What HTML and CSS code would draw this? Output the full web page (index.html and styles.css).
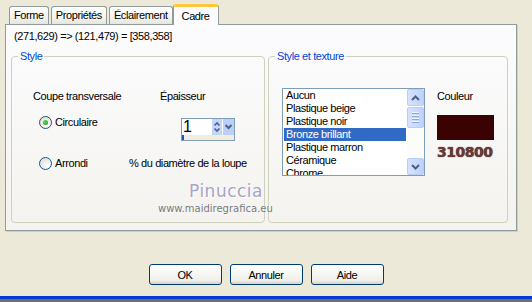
FILE: index.html
```html
<!DOCTYPE html>
<html lang="fr">
<head>
    <meta charset="UTF-8">
    <title>Cadre</title>
    <link rel="stylesheet" href="styles.css">
</head>
<body>
    <div class="tabs">
        <div class="tab">Forme</div>
        <div class="tab">Propriétés</div>
        <div class="tab">Éclairement</div>
        <div class="tab active">Cadre</div>
    </div>

    <div class="panel">
        <div class="coords">(271,629) =&gt; (121,479) = [358,358]</div>

        <div class="groups">
            <!-- Style -->
            <fieldset class="group group-style">
                <legend>Style</legend>
                <div class="row row-head">
                    <span class="col-section">Coupe transversale</span>
                    <span>Épaisseur</span>
                </div>
                <div class="row row-main">
                    <label class="radio radio-wide">
                        <span class="dot checked"></span>Circulaire
                    </label>
                    <div class="spinner">
                        <div class="spinner-top">
                            <span class="spinner-value">1</span>
                            <svg class="spinner-btns" width="22" height="16" viewBox="0 0 22 16">
                                <rect x="0" y="0" width="10" height="16" fill="#c4d5fa"/>
                                <rect x="11" y="0" width="11" height="16" fill="#bccff6"/>
                                <path d="M2.5 6.5 L5 4 L7.5 6.5" fill="none" stroke="#4d6185" stroke-width="1.6"/>
                                <path d="M2.5 9.5 L5 12 L7.5 9.5" fill="none" stroke="#4d6185" stroke-width="1.6"/>
                                <path d="M13.5 6 L16.5 9 L19.5 6" fill="none" stroke="#4d6185" stroke-width="2"/>
                            </svg>
                        </div>
                        <div class="spinner-bottom"></div>
                    </div>
                </div>
                <div class="row row-alt">
                    <label class="radio radio-narrow">
                        <span class="dot"></span>Arrondi
                    </label>
                    <span>% du diamètre de la loupe</span>
                </div>
            </fieldset>

            <!-- Style et texture -->
            <fieldset class="group group-texture">
                <legend>Style et texture</legend>
                <div class="texture-row">
                    <div class="listbox">
                        <ul class="list-items">
                            <li>Aucun</li>
                            <li>Plastique beige</li>
                            <li>Plastique noir</li>
                            <li class="selected">Bronze brillant</li>
                            <li>Plastique marron</li>
                            <li>Céramique</li>
                            <li>Chrome</li>
                        </ul>
                        <div class="scrollbar">
                            <div class="sb-btn">
                                <svg width="9" height="6" viewBox="0 0 9 6"><path d="M1 5 L4.5 1.5 L8 5" fill="none" stroke="#4d6185" stroke-width="2"/></svg>
                            </div>
                            <div class="sb-thumb">
                                <span></span><span></span><span></span><span></span>
                            </div>
                            <div class="sb-btn sb-down">
                                <svg width="9" height="6" viewBox="0 0 9 6"><path d="M1 1 L4.5 4.5 L8 1" fill="none" stroke="#4d6185" stroke-width="2"/></svg>
                            </div>
                        </div>
                    </div>
                    <div class="color-col">
                        <div class="color-label">Couleur</div>
                        <div class="swatch"></div>
                        <div class="hex">310800</div>
                    </div>
                </div>
            </fieldset>
        </div>

        <div class="watermark-name">Pinuccia</div>
        <div class="watermark-url">www.maidiregrafica.eu</div>
    </div>

    <div class="buttons">
        <button>OK</button>
        <button>Annuler</button>
        <button>Aide</button>
    </div>

    <div class="taskbar"></div>
</body>
</html>
```

FILE: styles.css
```css
body {
    margin: 0;
    height: 302px;
    display: flex;
    flex-direction: column;
    background-color: #ece9d8;
    font-family: "Liberation Sans", Arial, sans-serif;
    font-size: 11px;
    letter-spacing: -0.4px;
    line-height: 13px;
    color: #000;
    overflow: hidden;
}
.tabs {
    display: flex;
    align-items: flex-end;
    height: 21px;
    margin: 3px 0 0 9px;
}
.tab {
    height: 17px;
    line-height: 17px;
    padding: 0 4px;
    margin-right: 2px;
    border: 1px solid #919b9c;
    border-bottom: none;
    border-radius: 3px 3px 0 0;
    background: linear-gradient(#ffffff, #f3f3ef 60%, #e6e5dd);
}
.tab.active {
    position: relative;
    z-index: 1;
    height: 18px;
    line-height: 18px;
    margin: 0 0 -1px -2px;
    padding: 0 8px;
    border-top: 3px solid #ffc83c;
    background: #fcfcfe;
}
.panel {
    position: relative;
    width: 510px;
    height: 205px;
    margin-left: 5px;
    padding: 0;
    border: 1px solid #919b9c;
    background: linear-gradient(#fcfcfe, #f4f3ee);
    box-shadow: 1px 1px 0 #d0cfc6;
}
.coords {
    padding: 5px 0 0 8px;
}
.groups {
    display: flex;
    gap: 3px;
    margin: 7px 0 0 5px;
}
.group {
    box-sizing: border-box;
    height: 173px;
    margin: 0;
    padding: 0;
    border: 1px solid #d0d0bf;
    border-radius: 4px;
}
.group legend {
    margin-left: 6px;
    padding: 0 2px;
    color: #0046d5;
}
.group-style {
    width: 254px;
}
.group-texture {
    width: 240px;
}
.row {
    display: flex;
    align-items: flex-start;
}
.row-head {
    margin-top: 27px;
    padding-left: 21px;
}
.col-section {
    width: 127px;
}
.row-main {
    margin-top: 13px;
    padding-left: 27px;
}
.row-alt {
    margin-top: 16px;
    padding-left: 27px;
}
.radio {
    display: flex;
    align-items: center;
    gap: 3px;
    height: 13px;
}
.radio-wide {
    width: 142px;
}
.radio-narrow {
    width: 90px;
}
.dot {
    box-sizing: border-box;
    width: 13px;
    height: 13px;
    border: 1px solid #1c5180;
    border-radius: 50%;
    background: radial-gradient(circle at 70% 70%, #ffffff, #e2e1da 80%);
    display: flex;
    align-items: center;
    justify-content: center;
}
.dot.checked::after {
    content: "";
    width: 5px;
    height: 5px;
    border-radius: 50%;
    background: radial-gradient(circle at 35% 35%, #5ed95a, #1f8f1f);
}
.spinner {
    box-sizing: border-box;
    width: 54px;
    height: 23px;
    margin-top: 2px;
    border: 1px solid #7f9db9;
    background: #fff;
}
.spinner-top {
    display: flex;
    justify-content: space-between;
    height: 16px;
}
.spinner-value {
    font-size: 16px;
    line-height: 16px;
    padding-left: 1px;
}
.spinner-bottom {
    height: 5px;
    background: #f2eedb;
    border-left: 2px solid #2050d0;
}
.texture-row {
    display: flex;
    align-items: flex-start;
    margin-top: 25px;
    padding-left: 13px;
}
.listbox {
    display: flex;
    width: 143px;
    height: 88px;
    box-sizing: border-box;
    border: 1px solid #7f9db9;
    background: #fff;
}
.list-items {
    flex: 1;
    margin: 0;
    padding: 0 1px;
    list-style: none;
    overflow: hidden;
}
.list-items li {
    height: 13px;
    line-height: 13px;
    padding-left: 2px;
    white-space: nowrap;
}
.list-items li.selected {
    background: #316ac5;
    color: #fff;
}
.scrollbar {
    display: flex;
    flex-direction: column;
    width: 17px;
    background: #fcfcf9;
}
.sb-btn, .sb-thumb {
    box-sizing: border-box;
    height: 17px;
    border: 1px solid #b9cdf7;
    border-radius: 2px;
    background: linear-gradient(90deg, #d6e2fd, #c0d2fa);
    display: flex;
    align-items: center;
    justify-content: center;
}
.sb-thumb {
    height: 21px;
    margin-top: 1px;
    flex-direction: column;
    gap: 1px;
}
.sb-thumb span {
    width: 7px;
    height: 1px;
    background: #eef3ff;
    border-bottom: 1px solid #8aa5e0;
}
.sb-down {
    margin-top: auto;
}
.color-col {
    margin-left: 12px;
    padding-top: 2px;
}
.swatch {
    width: 57px;
    height: 25px;
    margin-top: 12px;
    background: #3a0202;
}
.hex {
    margin-top: 4px;
    font-family: "DejaVu Sans", sans-serif;
    font-weight: bold;
    font-size: 14px;
    line-height: 17px;
    letter-spacing: -0.5px;
    color: #6a3a3a;
    text-shadow: 0 0 1px #2a0a0a;
}
.watermark-name {
    position: absolute;
    left: 183px;
    top: 158px;
    font-family: "DejaVu Sans", sans-serif;
    font-size: 17px;
    line-height: 17px;
    letter-spacing: 0.5px;
    color: #a8a4c8;
    text-shadow: 1px 1px 0 #fff;
}
.watermark-url {
    position: absolute;
    left: 152px;
    top: 179px;
    font-family: "DejaVu Sans", sans-serif;
    font-size: 10px;
    line-height: 10px;
    letter-spacing: 0;
    color: #77777d;
    text-shadow: 0 0 1px #fff;
}
.buttons {
    display: flex;
    justify-content: center;
    gap: 8px;
    margin-top: 33px;
}
button {
    width: 73px;
    height: 21px;
    padding: 0;
    border: 1px solid #003c74;
    border-radius: 3px;
    background: linear-gradient(#ffffff, #f0efea 80%, #d8d2c6);
    font-family: "Liberation Sans", Arial, sans-serif;
    font-size: 11px;
    letter-spacing: -0.4px;
    color: #000;
}
.taskbar {
    margin-top: auto;
    height: 3px;
    border-bottom: 3px solid #6f6f6f;
    background: #0a3bd1;
}
```
